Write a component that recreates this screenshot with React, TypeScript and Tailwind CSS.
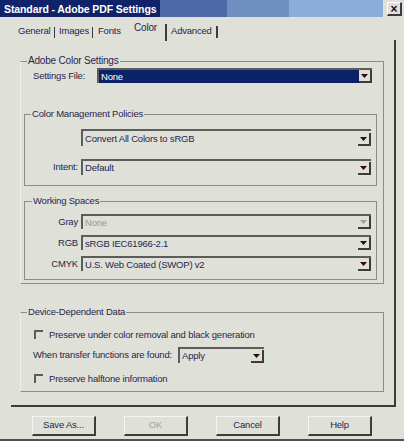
import React from 'react';

const Arrow = ({ disabled }: { disabled?: boolean }) => (
  <div className="w-[13px] h-[13px] flex items-center justify-center border-r-2 border-b-2 border-[#3c3c3c] bg-[#dfe0d8] shrink-0">
    <svg width="7" height="4" viewBox="0 0 7 4">
      <path d="M0 0h7L3.5 4z" fill={disabled ? '#a0a0a0' : '#2a0818'} />
    </svg>
  </div>
);

interface SelectProps {
  value: string;
  width: string;
  height?: string;
  selected?: boolean;
  disabled?: boolean;
}

const Select: React.FC<SelectProps> = ({ value, width, height = 'h-[16px]', selected, disabled }) => (
  <div
    className={`${width} ${height} flex items-end justify-between border-t-2 border-l-2 border-[#5c5c5a] ${
      selected ? 'bg-[#0c2268]' : 'bg-[#dfe0d8]'
    }`}
  >
    <span
      className={`self-center pl-[2px] leading-[12px] ${
        selected ? 'text-white' : disabled ? 'text-[#9a9a98]' : 'text-[#26264e]'
      }`}
    >
      {value}
    </span>
    <Arrow disabled={disabled} />
  </div>
);

const Check = ({ label }: { label: string }) => (
  <div className="flex items-center gap-[6px] h-[13px]">
    <div className="w-[9px] h-[9px] border-t-2 border-l-2 border-[#5c5c5a]" />
    <span className="leading-[12px]">{label}</span>
  </div>
);

const Btn = ({ label, disabled }: { label: string; disabled?: boolean }) => (
  <div
    className={`w-[64px] h-[20px] flex items-center justify-center border-r-2 border-b-2 border-[#3c3c3c] border-t border-l border-t-[#f4f4f0] border-l-[#f4f4f0] ${
      disabled ? 'text-[#a4a4a2]' : 'text-[#26264e]'
    }`}
  >
    {label}
  </div>
);

export default function App() {
  return (
    <div className="w-[404px] h-[441px] bg-[#dfe0d8] font-['Liberation_Sans',Arial,sans-serif] text-[9.5px] tracking-[-0.2px] text-[#26264e] border-b-2 border-[#505050] overflow-hidden">
      {/* title bar */}
      <div className="flex items-start h-[17px]">
        <div className="w-[383px] h-[17px] flex items-center pl-[4px] bg-[linear-gradient(to_right,#0f226a_0,#0f226a_160px,#4f69a7_160px,#4f69a7_227px,#6f8fc0_227px,#6f8fc0_289px,#8aaed9_289px)]">
          <span className="text-white font-bold text-[10.5px] tracking-[-0.1px] leading-[14px]">Standard - Adobe PDF Settings</span>
        </div>
        <div className="ml-[4px] mt-[2px] w-[15px] h-[14px] flex items-center justify-center border-t border-l border-white border-r-2 border-b-2 border-r-[#3c3c3c] border-b-[#3c3c3c] text-[#2a0818] text-[12px] leading-none font-bold">
          ×
        </div>
      </div>

      {/* tabs */}
      <div className="flex items-end h-[23px] pl-[18px]">
        <span className="pb-[3px] leading-[12px] w-[34px]">General</span>
        <span className="w-px h-[11px] bg-[#3c3c3c] ml-[2px] mr-[4px] mb-[2px]" />
        <span className="pb-[3px] leading-[12px] w-[31px]">Images</span>
        <span className="w-px h-[11px] bg-[#3c3c3c] ml-[2px] mr-[5px] mb-[2px]" />
        <span className="pb-[3px] leading-[12px] w-[24px]">Fonts</span>
        <span className="pb-[6px] leading-[12px] ml-[12px] w-[22px] text-[10px]">Color</span>
        <span className="w-[2px] h-[17px] bg-[#3c3c3c] ml-[9px] mr-[4px] -mb-[1px]" />
        <span className="pb-[3px] leading-[12px] w-[42px]">Advanced</span>
        <span className="w-[2px] h-[12px] bg-[#3c3c3c] ml-[3px] mb-[2px]" />
      </div>

      {/* tab panel */}
      <div className="ml-[11px] w-[385px] h-[367px] border-r-2 border-b-2 border-[#3c3c3c] pt-[15px]">
        <fieldset className="ml-[9px] w-[364px] border border-[#8c8c88] border-l-[#f0f0ea] pb-[3px]">
          <legend className="ml-[6px] px-[1px] leading-[12px] text-[10px]">Adobe Color Settings</legend>
          <div className="pl-[12px]">
            <div className="flex items-center mt-[1px]">
              <span className="w-[64px] leading-[12px]">Settings File:</span>
              <Select value="None" width="w-[275px]" height="h-[15px]" selected />
            </div>

            <fieldset className="-ml-[9px] mt-[25px] w-[353px] border border-[#8c8c88] pb-[10px]">
              <legend className="ml-[6px] px-[1px] leading-[12px]">Color Management Policies</legend>
              <div className="pl-[56px]">
                <div className="mt-[9px]">
                  <Select value="Convert All Colors to sRGB" width="w-[290px]" height="h-[17px]" />
                </div>
                <div className="flex items-center mt-[13px] -ml-[30px]">
                  <span className="w-[30px] text-right pr-[3px] leading-[12px]">Intent:</span>
                  <Select value="Default" width="w-[290px]" />
                </div>
              </div>
            </fieldset>

            <fieldset className="-ml-[9px] mt-[9px] w-[353px] border border-[#8c8c88] pb-[8px]">
              <legend className="ml-[7px] px-[1px] leading-[12px]">Working Spaces</legend>
              <div className="flex flex-col gap-[6px] mt-[7px]">
                <div className="flex items-center">
                  <span className="w-[56px] text-right pr-[3px] leading-[12px]">Gray</span>
                  <Select value="None" width="w-[290px]" height="h-[15px]" disabled />
                </div>
                <div className="flex items-center">
                  <span className="w-[56px] text-right pr-[3px] leading-[12px]">RGB</span>
                  <Select value="sRGB IEC61966-2.1" width="w-[290px]" height="h-[15px]" />
                </div>
                <div className="flex items-center">
                  <span className="w-[56px] text-right pr-[3px] leading-[12px]">CMYK</span>
                  <Select value="U.S. Web Coated (SWOP) v2" width="w-[290px]" height="h-[15px]" />
                </div>
              </div>
            </fieldset>
          </div>
        </fieldset>

        <fieldset className="ml-[9px] mt-[22px] w-[364px] border border-[#8c8c88] border-l-[#f0f0ea] pb-[6px]">
          <legend className="ml-[6px] px-[1px] leading-[12px]">Device-Dependent Data</legend>
          <div className="pl-[13px]">
            <div className="mt-[10px]">
              <Check label="Preserve under color removal and black generation" />
            </div>
            <div className="flex items-center mt-[6px] -ml-[1px]">
              <span className="w-[145px] leading-[12px]">When transfer functions are found:</span>
              <Select value="Apply" width="w-[86px]" />
            </div>
            <div className="mt-[9px]">
              <Check label="Preserve halftone information" />
            </div>
          </div>
        </fieldset>
      </div>

      {/* buttons */}
      <div className="flex mt-[9px] pl-[32px] gap-[28px]">
        <Btn label="Save As..." />
        <Btn label="OK" disabled />
        <Btn label="Cancel" />
        <Btn label="Help" />
      </div>
    </div>
  );
}
